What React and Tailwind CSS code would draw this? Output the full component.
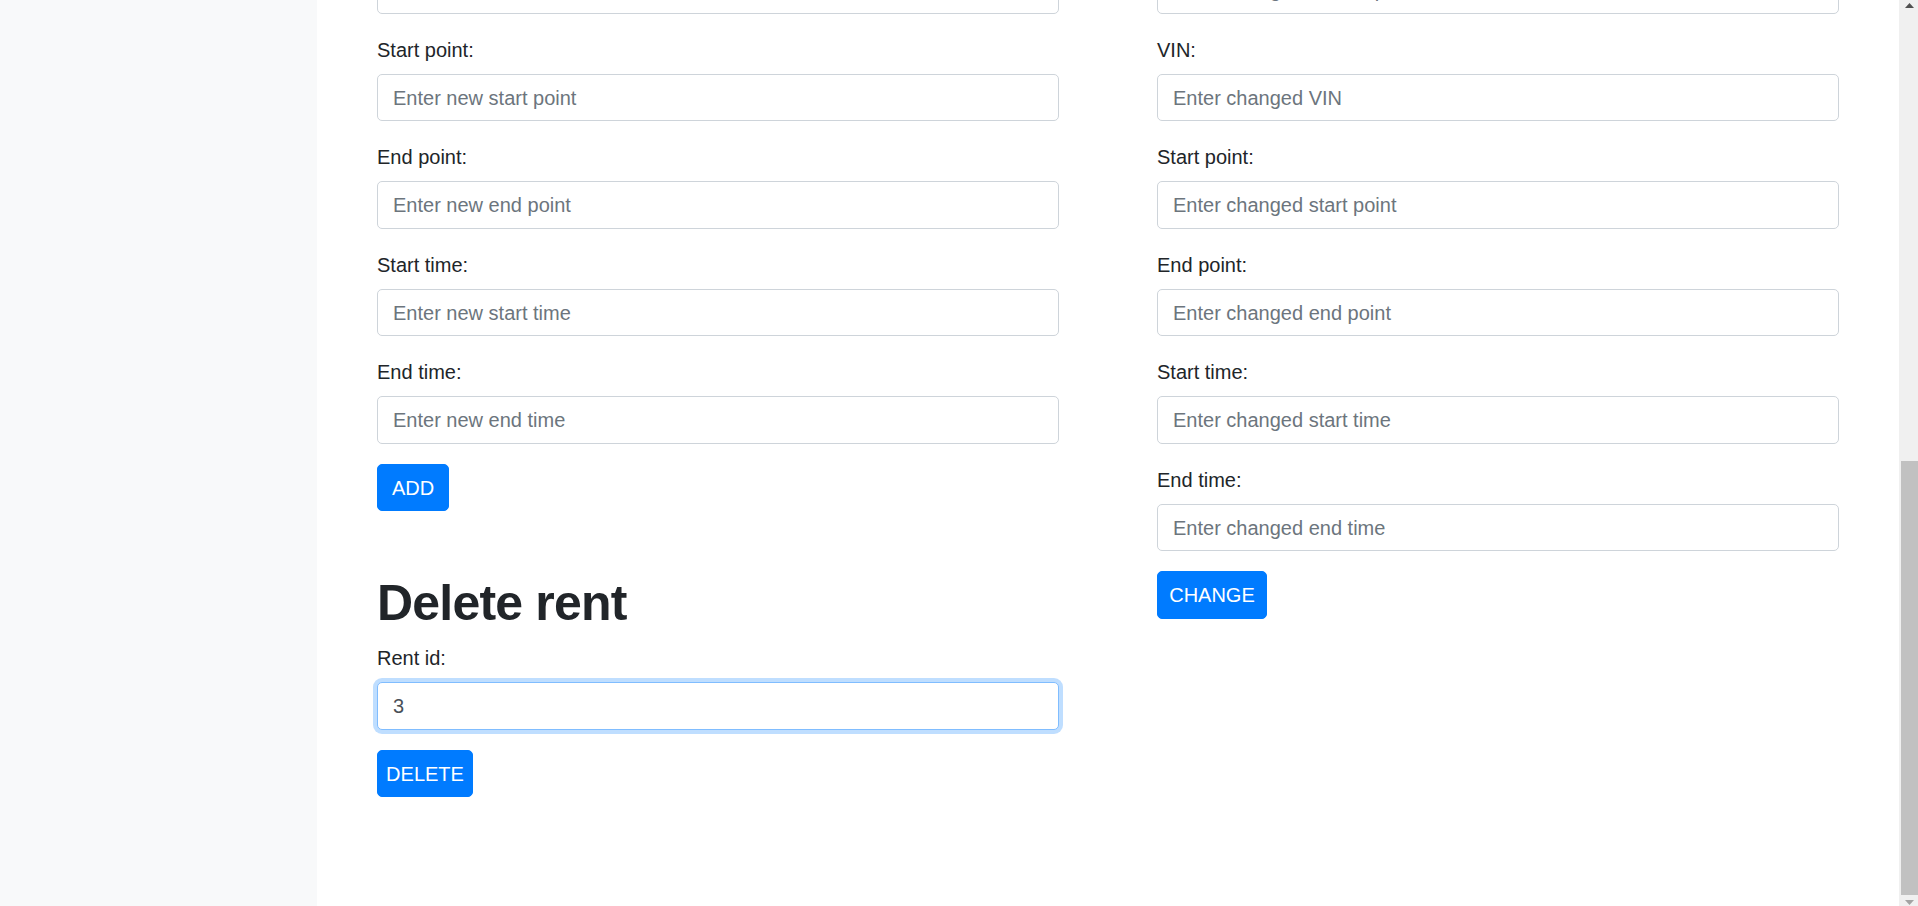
import { useState } from "react";

const inputBase =
  "block w-full h-[47.5px] px-[15px] pt-[8.5px] pb-[6.5px] text-[20px] leading-[30px] text-[#495057] bg-white border rounded-[5px] outline-none placeholder:text-[#6c757d]";

const labelCls =
  "block mb-[9px] pt-[1px] text-[20px] leading-[30px] text-[#212529]";

function Field({ label, placeholder }) {
  return (
    <div className="mb-[20px]">
      <label className={labelCls}>{label}</label>
      <input
        type="text"
        placeholder={placeholder}
        className={`${inputBase} border-[#ced4da]`}
      />
    </div>
  );
}

function Button({ children, width }) {
  return (
    <button
      type="button"
      className={`${width} h-[47.5px] pt-[1px] text-center text-[20px] leading-[30px] text-white bg-[#007bff] border border-[#007bff] rounded-[5px]`}
    >
      {children}
    </button>
  );
}

function Scrollbar() {
  return (
    <div className="w-[19px] shrink-0 bg-[#f0f0f0] flex flex-col">
      <div className="h-[14px] flex items-start justify-center pt-[3px] pl-[2px]">
        <svg width="9" height="5" viewBox="0 0 9 5">
          <polygon points="4.5,0 9,5 0,5" fill="#505050" />
        </svg>
      </div>
      <div className="h-[447px]" />
      <div className="h-[434px] ml-[2px] bg-[#c1c1c1]" />
      <div className="flex-1 flex items-start justify-center pt-[5px] pl-[2px]">
        <svg width="9" height="5" viewBox="0 0 9 5">
          <polygon points="0,0 9,0 4.5,5" fill="#a3a3a3" />
        </svg>
      </div>
    </div>
  );
}

export default function App() {
  const [rentId, setRentId] = useState("3");

  return (
    <div className="flex h-[906px] overflow-hidden bg-white font-['Liberation_Sans',Arial,sans-serif]">
      {/* Sidebar */}
      <aside className="w-[317px] shrink-0 bg-[#f8f9fa]" />

      {/* Main */}
      <main className="flex-1 min-w-0 px-[60px]">
        <div className="grid grid-cols-2 gap-x-[98px] -mt-[74px]">
          {/* Add rent form */}
          <div>
            <Field label="VIN:" placeholder="Enter new VIN" />
            <Field label="Start point:" placeholder="Enter new start point" />
            <Field label="End point:" placeholder="Enter new end point" />
            <Field label="Start time:" placeholder="Enter new start time" />
            <Field label="End time:" placeholder="Enter new end time" />
            <Button width="w-[72px]">ADD</Button>

            <h1 className="mt-[61px] mb-[10px] pt-[2px] h-[60px] text-[50px] leading-[58px] font-bold tracking-[-0.8px] text-[#212529]">
              Delete rent
            </h1>
            <div className="mb-[20px]">
              <label className={labelCls}>Rent id:</label>
              <input
                type="text"
                value={rentId}
                onChange={(e) => setRentId(e.target.value)}
                className={`${inputBase} border-[#80bdff] shadow-[0_0_0_4px_rgba(0,123,255,0.25)]`}
              />
            </div>
            <Button width="w-[96px]">DELETE</Button>
          </div>

          {/* Change rent form */}
          <div>
            <Field label="Client's phone:" placeholder="Enter changed client's phone" />
            <Field label="VIN:" placeholder="Enter changed VIN" />
            <Field label="Start point:" placeholder="Enter changed start point" />
            <Field label="End point:" placeholder="Enter changed end point" />
            <Field label="Start time:" placeholder="Enter changed start time" />
            <Field label="End time:" placeholder="Enter changed end time" />
            <Button width="w-[110px]">CHANGE</Button>
          </div>
        </div>
      </main>

      <Scrollbar />
    </div>
  );
}
